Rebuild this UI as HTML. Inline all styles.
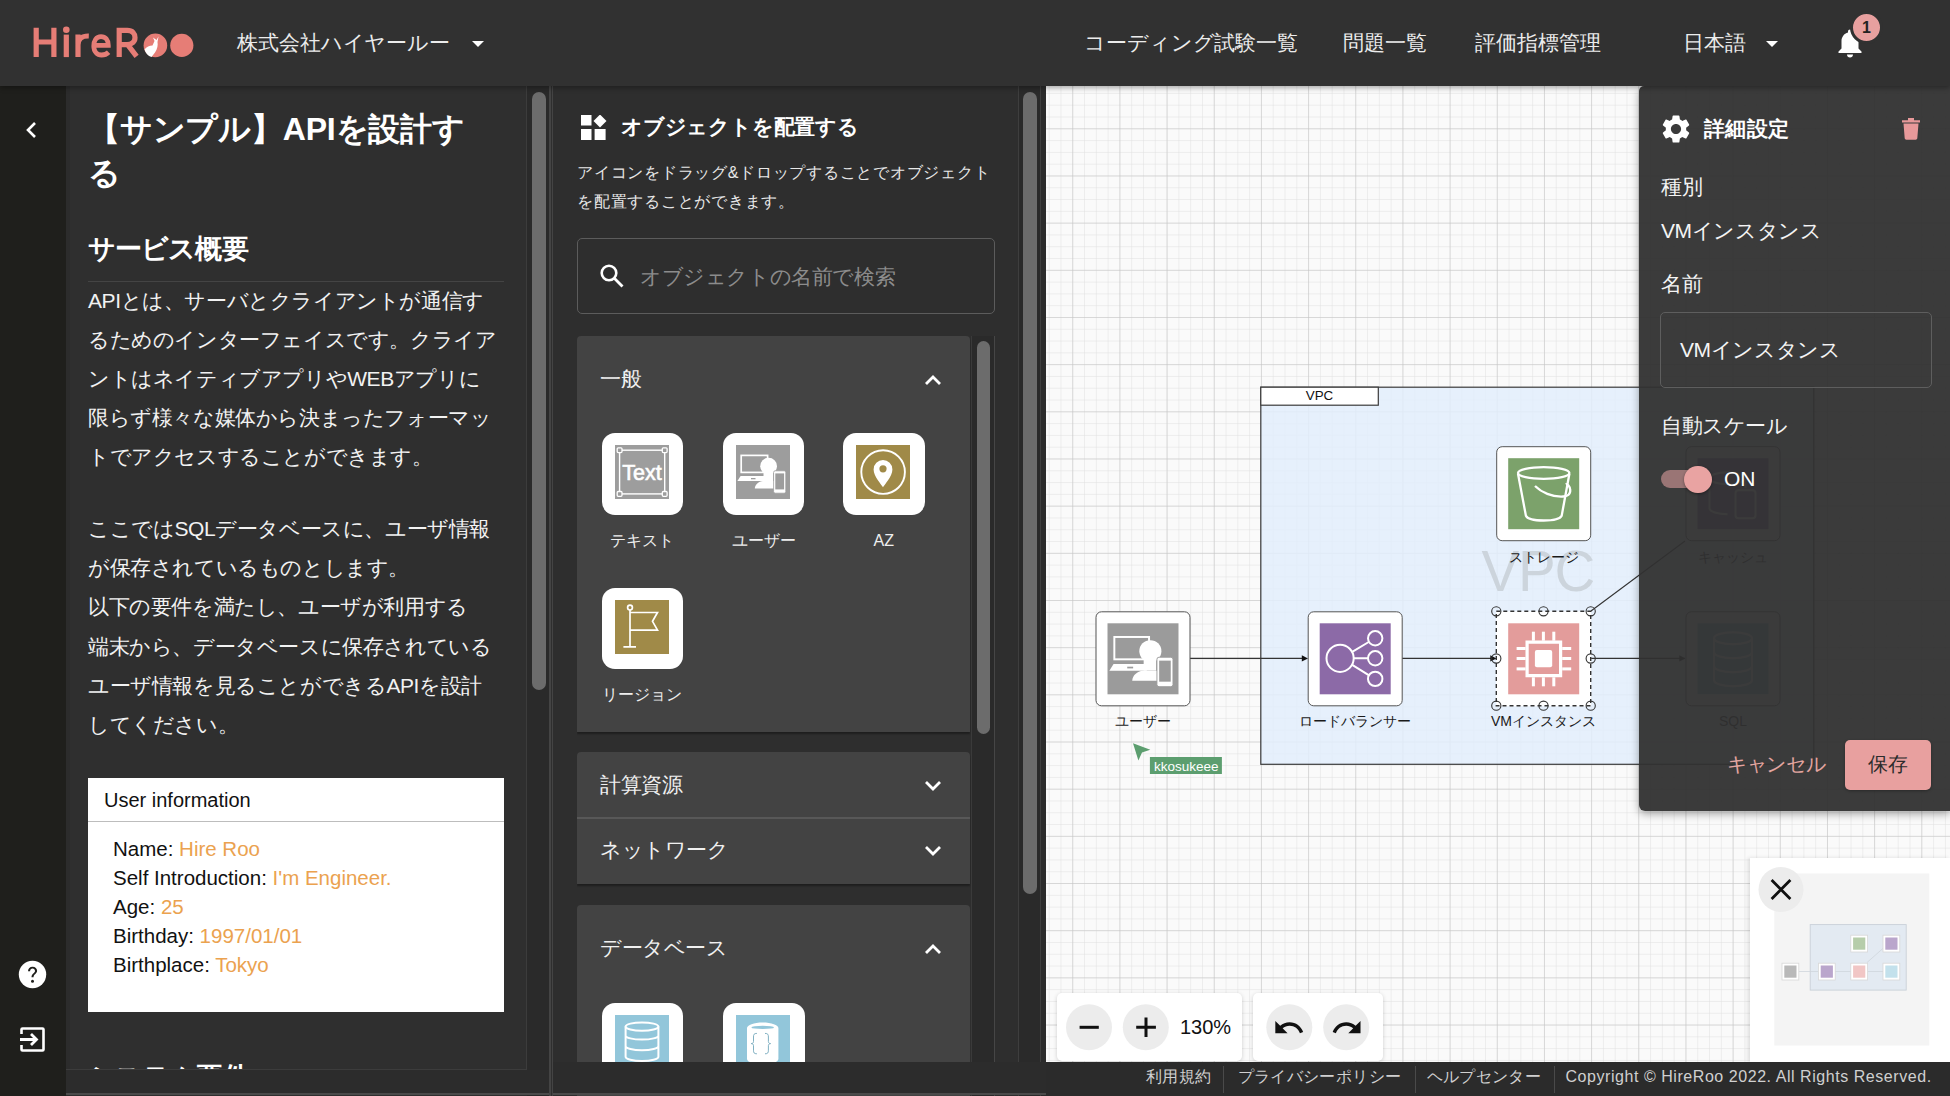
<!DOCTYPE html>
<html><head><meta charset="utf-8">
<style>
*{box-sizing:border-box;margin:0;padding:0}
html,body{width:1950px;height:1096px;overflow:hidden;background:#2b2b2b;font-family:"Liberation Sans",sans-serif;color:#fff}
.a{position:absolute;white-space:nowrap}
#hdr{left:0;top:0;width:1950px;height:86px;background:#313131;box-shadow:0 2px 5px rgba(0,0,0,.32);z-index:10}
.nav{font-size:21px;letter-spacing:-0.1px;line-height:24px;color:#ececec;top:31px}
.tri{width:0;height:0;border-left:6px solid transparent;border-right:6px solid transparent;border-top:6px solid #fff}
#side{left:0;top:86px;width:66px;height:1010px;background:#1f1f1c}
#prob{left:66px;top:86px;width:485px;height:1010px;background:#2f2f2f;overflow:hidden}
#obj{left:553px;top:86px;width:493px;height:1010px;background:#2e2e2e;overflow:hidden}
#canvas{left:1046px;top:86px;width:904px;height:976px;background-color:#fafafa;overflow:hidden}
#foot{left:1046px;top:1061.5px;width:904px;height:34.5px;background:#2b2b2b;z-index:7}
.lbl{font-size:16px;line-height:24px;text-align:center;color:#eee}
.acct{font-size:21px;letter-spacing:-0.4px;line-height:24px;color:#f0f0f0}
.clab{width:160px;text-align:center;font-size:14px;line-height:20px;color:#1a1a1a}
.dlab{font-size:21px;letter-spacing:-0.4px;line-height:24px;color:#f4f4f4}
.ft{font-size:16px;letter-spacing:0.4px;line-height:24px;color:#d0d0d0}
</style></head><body>
<!-- HEADER -->
<div id="hdr" class="a">
  <svg class="a" style="left:0;top:0" width="220" height="86" viewBox="0 0 220 86">
  <g stroke="#e67d76" fill="none" stroke-width="5.2">
    <path d="M36.2 27.8V57.1M53.9 27.8V57.1M36.2 42H53.9"/>
    <path d="M66.3 34.6V57.1"/>
    <path d="M78 57.1V34.6M78 45C78 38.5 82 35.8 88.8 36"/>
    <path d="M93.8 45.4H108.3C108.3 39.5 105.3 36.6 101 36.6C96.2 36.6 93.8 40.6 93.8 46C93.8 51.6 97.2 55 101.6 55C104.6 55 106.6 54.2 108.6 52.2" stroke-width="4.8"/>
    <path d="M119.2 57.1V30.4H127.2C132.6 30.4 135 33.6 135 37.6C135 41.8 132 44.6 127 44.6H119.2M127.6 44.6L136.6 56.3"/>
  </g>
  <circle cx="66.3" cy="29.8" r="3.3" fill="#e67d76"/>
  <circle cx="155.4" cy="45.4" r="11.8" fill="#e67d76"/>
  <circle cx="181.8" cy="45.4" r="11.6" fill="#e67d76"/>
  <path d="M144.5 49.5C146.5 47 149.5 45.5 152.5 45.5L154.5 41L153 37.5L156.5 40L158.5 36.5L157.5 42C158 45 157.5 49 155 52.5L151.5 57C148 56 145.5 53 144.5 49.5z" fill="#fff"/>
</svg>
  <div class="a nav" style="left:237px">株式会社ハイヤールー</div>
  <div class="a tri" style="left:472px;top:41px"></div>
  <div class="a nav" style="left:1084px">コーディング試験一覧</div>
  <div class="a nav" style="left:1343px">問題一覧</div>
  <div class="a nav" style="left:1475px">評価指標管理</div>
  <div class="a nav" style="left:1683px">日本語</div>
  <div class="a tri" style="left:1766px;top:41px"></div>
  <svg class="a" style="left:1836px;top:28px" width="28" height="30" viewBox="0 0 28 30">
    <path d="M14 1.5c-1.2 0-2 .9-2 2v.9C8 5.4 5.5 9 5.5 13v7.5L2.5 23.5V25h23v-1.5l-3-3V13c0-4-2.5-7.6-6.5-8.6v-.9c0-1.1-.8-2-2-2z M11 26.5c0 1.7 1.3 3 3 3s3-1.3 3-3z" fill="#fff"/>
  </svg>
  <div class="a" style="left:1850px;top:11px;width:33px;height:33px;border-radius:50%;background:#e8a09f;border:3px solid #313131;color:#222;font-size:16px;font-weight:bold;line-height:27px;text-align:center">1</div>
</div>

<!-- SIDEBAR -->
<div id="side" class="a">
  <svg class="a" style="left:24px;top:35px" width="16" height="18" viewBox="0 0 16 18"><path d="M11 2 L4 9 L11 16" stroke="#fff" stroke-width="2.6" fill="none"/></svg>
  <svg class="a" style="left:18px;top:874px" width="29" height="29" viewBox="0 0 29 29">
    <circle cx="14.5" cy="14.5" r="13.7" fill="#fff"/>
    <path d="M10 11.2c0-2.7 2-4.5 4.6-4.5 2.6 0 4.5 1.7 4.5 4 0 3-3.4 3.2-3.6 6.6h-2c0-4 3.5-4.3 3.5-6.4 0-1.3-1-2.3-2.4-2.3-1.5 0-2.5 1.1-2.5 2.6z" fill="#1f1f1c"/>
    <circle cx="14.5" cy="21.3" r="1.5" fill="#1f1f1c"/>
  </svg>
  <svg class="a" style="left:19px;top:940px" width="27" height="27" viewBox="0 0 27 27">
    <path d="M2.5 8V3.5c0-.6.4-1 1-1h20c.6 0 1 .4 1 1v20c0 .6-.4 1-1 1h-20c-.6 0-1-.4-1-1V19" stroke="#fff" stroke-width="2.6" fill="none"/>
    <path d="M1 13.5h16 M12 8l5.5 5.5L12 19" stroke="#fff" stroke-width="2.8" fill="none"/>
  </svg>
</div>

<!-- PROBLEM PANEL -->
<div id="prob" class="a">
  <div class="a" style="left:0;top:0;width:4px;height:1010px;background:#2c2c2c"></div>
  <div class="a" style="left:0;top:0;width:461px;height:984px;overflow:hidden;border-right:1px solid #3c3c3c;border-bottom:1px solid #3c3c3c">
    <div class="a" style="left:22px;top:22px;font-size:32px;letter-spacing:-0.2px;line-height:43.5px;font-weight:bold;color:#fff">【サンプル】APIを設計す<br>る</div>
    <div class="a" style="left:22px;top:148px;font-size:27px;letter-spacing:-0.9px;line-height:30px;font-weight:bold;color:#fff">サービス概要</div>
    <div class="a" style="left:22px;top:195px;width:416px;height:1px;background:#444"></div>
    <div class="a" style="left:22px;top:194.5px;font-size:21px;letter-spacing:-0.4px;line-height:39.2px;color:#f2f2f2">APIとは、サーバとクライアントが通信す<br>るためのインターフェイスです。クライア<br>ントはネイティブアプリやWEBアプリに<br>限らず様々な媒体から決まったフォーマッ<br>トでアクセスすることができます。</div>
    <div class="a" style="left:22px;top:423px;font-size:21px;letter-spacing:-0.4px;line-height:39.2px;color:#f2f2f2">ここではSQLデータベースに、ユーザ情報<br>が保存されているものとします。<br>以下の要件を満たし、ユーザが利用する<br>端末から、データベースに保存されている<br>ユーザ情報を見ることができるAPIを設計<br>してください。</div>
    <div class="a" style="left:22px;top:692px;width:416px;height:234px;background:#fff">
      <div class="a" style="left:16px;top:10px;font-size:20px;line-height:24px;color:#111">User information</div>
      <div class="a" style="left:0;top:43px;width:416px;height:1px;background:#bdbdbd"></div>
      <div class="a" style="left:25px;top:56px;font-size:20.5px;line-height:29px;color:#111">Name: <span style="color:#eba24f">Hire Roo</span><br>Self Introduction: <span style="color:#eba24f">I'm Engineer.</span><br>Age: <span style="color:#eba24f">25</span><br>Birthday: <span style="color:#eba24f">1997/01/01</span><br>Birthplace: <span style="color:#eba24f">Tokyo</span></div>
    </div>
    <div class="a" style="left:22px;top:976px;font-size:27px;letter-spacing:-0.9px;line-height:30px;font-weight:bold;color:#fff">システム要件</div>
  </div>
  <div class="a" style="left:461px;top:0;width:23px;height:1010px;background:#2a2a2a"></div>
  <div class="a" style="left:466px;top:6px;width:14px;height:598px;border-radius:7px;background:#6c6c6c"></div>
  <div class="a" style="left:0;top:984px;width:485px;height:23px;background:#2c2c2c"></div>
  <div class="a" style="left:0;top:1007px;width:485px;height:1.5px;background:#4a4a4a"></div>
  <div class="a" style="left:483px;top:0;width:2px;height:1010px;background:#444"></div>
</div>
<div class="a" style="left:551px;top:86px;width:2px;height:1010px;background:#2f2f2f"></div>
<div class="a" style="left:552px;top:86px;width:1px;height:1010px;background:#444"></div>

<div id="obj" class="a">
  <svg class="a" style="left:28px;top:29px" width="26" height="26" viewBox="0 0 26 26"><rect x="0" y="0" width="10.5" height="10.5" fill="#fff"/><rect x="0" y="14" width="10.5" height="11" fill="#fff"/><rect x="13.6" y="14" width="11" height="11" fill="#fff"/><path d="M19 -.5 L25.5 6 L19 12.5 L12.5 6z" fill="#fff"/></svg>
  <div class="a" style="left:68px;top:28px;font-size:21px;letter-spacing:-0.2px;line-height:25px;font-weight:bold;color:#fff">オブジェクトを配置する</div>
  <div class="a" style="left:24px;top:72px;font-size:16px;letter-spacing:0.75px;line-height:29.3px;color:#e8e8e8">アイコンをドラッグ&amp;ドロップすることでオブジェクト<br>を配置することができます。</div>
  <div class="a" style="left:24px;top:152px;width:418px;height:75.5px;border:1px solid #5c5c5c;border-radius:5px"></div>
  <svg class="a" style="left:46px;top:177px" width="26" height="26" viewBox="0 0 26 26"><circle cx="10" cy="10" r="7.3" stroke="#fff" stroke-width="2.6" fill="none"/><path d="M15.3 15.3 L23.5 23.5" stroke="#fff" stroke-width="2.8"/></svg>
  <div class="a" style="left:87px;top:178px;font-size:21px;letter-spacing:-0.4px;line-height:25px;color:#8c8c8c">オブジェクトの名前で検索</div>
  <div class="a" style="left:24px;top:250px;width:420px;height:812px;overflow:hidden">
    <div class="a" style="left:0;top:0;width:393px;height:396px;background:#434343;border-radius:4px 4px 0 0;box-shadow:0 2px 2px rgba(0,0,0,.35)">
      <div class="a acct" style="left:23px;top:31px">一般</div>
      <svg class="a" style="left:347px;top:37.5px" width="18" height="13" viewBox="0 0 18 13"><path d="M2 10 L9 3 L16 10" stroke="#fff" stroke-width="2.8" fill="none"/></svg>
      <div class="a" style="left:24.700000000000045px;top:97px;width:81.5px;height:81.5px;border-radius:13px;background:#fff"><div class="a" style="left:13.3px;top:12px;width:54px;height:54px"><svg width="54" height="54" viewBox="0 0 54 54"><rect width="54" height="54" fill="#9d9d9d"/><rect x="4.6" y="5.2" width="45.1" height="43.7" fill="none" stroke="#fff" stroke-width="1.4"/><g fill="#9d9d9d" stroke="#fff" stroke-width="1.3"><rect x="2.2" y="2.8" width="4.8" height="4.8" rx="1"/><rect x="47.3" y="2.8" width="4.8" height="4.8" rx="1"/><rect x="2.2" y="46.5" width="4.8" height="4.8" rx="1"/><rect x="47.3" y="46.5" width="4.8" height="4.8" rx="1"/></g><text x="27" y="35.2" text-anchor="middle" font-family="Liberation Sans" font-size="21.5" fill="#fff" stroke="#fff" stroke-width="0.6">Text</text></svg></div></div><div class="a lbl" style="left:4.7000000000000455px;top:193px;width:121.5px">テキスト</div><div class="a" style="left:145.79999999999995px;top:97px;width:81.5px;height:81.5px;border-radius:13px;background:#fff"><div class="a" style="left:13.3px;top:12px;width:54px;height:54px"><svg width="54" height="54" viewBox="0 0 54 54"><rect width="54" height="54" fill="#9d9d9d"/><rect x="5.2" y="10.4" width="26.4" height="17" fill="none" stroke="#fff" stroke-width="1.7"/><path d="M4.6 31H28.5L30 36.1H1.4z" fill="#fff"/><rect x="15" y="33" width="4.5" height="1.3" fill="#9d9d9d"/><circle cx="32.6" cy="21.2" r="8.4" fill="#fff"/><path d="M27.5 26h9.5v10h-9.5z" fill="#fff"/><path d="M18.8 43.6C19 39.5 22.5 36.4 27 36H37.5C39.5 36.4 40.5 38 40.5 43.6z" fill="#fff"/><rect x="37.6" y="25.8" width="12.2" height="22.4" rx="1.6" fill="#fff" stroke="#9d9d9d" stroke-width=".8"/><rect x="39.3" y="28.4" width="8.8" height="16" fill="#9d9d9d"/></svg></div></div><div class="a lbl" style="left:125.79999999999995px;top:193px;width:121.5px">ユーザー</div><div class="a" style="left:266px;top:97px;width:81.5px;height:81.5px;border-radius:13px;background:#fff"><div class="a" style="left:13.3px;top:12px;width:54px;height:54px"><svg width="54" height="54" viewBox="0 0 54 54"><rect width="54" height="54" fill="#a08a48"/><circle cx="27.1" cy="27.1" r="21.8" fill="none" stroke="#fff" stroke-width="1.9"/><path d="M27 42.3C26 40 17.6 31.5 17.6 24.4a9.4 9.4 0 0 1 18.8 0C36.4 31.5 28 40 27 42.3z" fill="#fff"/><circle cx="27" cy="23.8" r="3.6" fill="#a08a48"/></svg></div></div><div class="a lbl" style="left:246px;top:193px;width:121.5px">AZ</div><div class="a" style="left:24.600000000000023px;top:251.5px;width:81.5px;height:81.5px;border-radius:13px;background:#fff"><div class="a" style="left:13.3px;top:12px;width:54px;height:54px"><svg width="54" height="54" viewBox="0 0 54 54"><rect width="54" height="54" fill="#a08a48"/><g stroke="#fff" stroke-width="1.7" fill="none"><circle cx="15" cy="7.6" r="2.4"/><path d="M15 10v36.8M8.4 46.8h12.6M15 12.5h27.5l-5 8.8 5 8.8H15"/></g></svg></div></div><div class="a lbl" style="left:4.600000000000023px;top:347px;width:121.5px">リージョン</div>
    </div>
    <div class="a" style="left:0;top:416px;width:393px;height:132px;background:#434343;border-radius:4px 4px 0 0;box-shadow:0 2px 2px rgba(0,0,0,.35)">
      <div class="a acct" style="left:23px;top:21px">計算資源</div>
      <svg class="a" style="left:347px;top:27px" width="18" height="13" viewBox="0 0 18 13"><path d="M2 3 L9 10 L16 3" stroke="#fff" stroke-width="2.8" fill="none"/></svg>
      <div class="a" style="left:0;top:65px;width:393px;height:1.5px;background:#585858"></div>
      <div class="a acct" style="left:23px;top:86px">ネットワーク</div>
      <svg class="a" style="left:347px;top:92px" width="18" height="13" viewBox="0 0 18 13"><path d="M2 3 L9 10 L16 3" stroke="#fff" stroke-width="2.8" fill="none"/></svg>
    </div>
    <div class="a" style="left:0;top:569px;width:393px;height:400px;background:#434343;border-radius:4px 4px 0 0">
      <div class="a acct" style="left:23px;top:30.5px">データベース</div>
      <svg class="a" style="left:347px;top:38px" width="18" height="13" viewBox="0 0 18 13"><path d="M2 10 L9 3 L16 10" stroke="#fff" stroke-width="2.8" fill="none"/></svg>
      <div class="a" style="left:24.5px;top:98.20000000000005px;width:81.5px;height:81.5px;border-radius:13px;background:#fff"><div class="a" style="left:13.3px;top:12px;width:54px;height:54px"><svg width="54" height="54" viewBox="0 0 54 54"><rect width="54" height="54" fill="#92c6da"/><g stroke="#fff" stroke-width="2" fill="none"><ellipse cx="27" cy="11.6" rx="16.4" ry="4.2"/><path d="M10.6 11.6V41.8C10.6 44.1 17.9 46 27 46S43.4 44.1 43.4 41.8V11.6M10.6 20.4C10.6 22.7 17.9 24.6 27 24.6S43.4 22.7 43.4 20.4M10.6 31.1C10.6 33.4 17.9 35.3 27 35.3S43.4 33.4 43.4 31.1"/></g></svg></div></div><div class="a" style="left:146px;top:98.20000000000005px;width:81.5px;height:81.5px;border-radius:13px;background:#fff"><div class="a" style="left:13.3px;top:12px;width:54px;height:54px"><svg width="54" height="54" viewBox="0 0 54 54"><rect width="54" height="54" fill="#92c6da"/><path d="M11 13c0-3 7-5.5 15.7-5.5s15.7 2.5 15.7 5.5v31c0 3-7 5.5-15.7 5.5S11 47 11 44z" fill="#fff"/><ellipse cx="26.7" cy="12.4" rx="11.3" ry="1.7" fill="#92c6da"/><g stroke="#7fb0c2" stroke-width="1" fill="none"><path d="M20.9 18.4C18 18.4 17.5 19.5 17.5 22V26.5C17.5 28 16.5 28.6 15.2 28.6C16.5 28.6 17.5 29.2 17.5 30.7V35.2C17.5 37.7 18 38.8 20.9 38.8"/><path d="M29 18.4C31.9 18.4 32.4 19.5 32.4 22V26.5C32.4 28 33.4 28.6 34.6 28.6C33.4 28.6 32.4 29.2 32.4 30.7V35.2C32.4 37.7 31.9 38.8 29 38.8"/></g></svg></div></div>
    </div>
    <div class="a" style="left:395px;top:0;width:22px;height:812px;background:#2a2a2a"></div>
    <div class="a" style="left:394px;top:0;width:1px;height:812px;background:#3a3a3a"></div>
    <div class="a" style="left:417px;top:0;width:1px;height:812px;background:#464646"></div>
    <div class="a" style="left:400px;top:5px;width:13px;height:393px;border-radius:6.5px;background:#6c6c6c"></div>
  </div>
  <div class="a" style="left:465px;top:0;width:1px;height:1010px;background:#3e3e3e"></div>
  <div class="a" style="left:466px;top:0;width:21px;height:1010px;background:#2a2a2a"></div>
  <div class="a" style="left:470px;top:6px;width:14px;height:802px;border-radius:7px;background:#6c6c6c"></div>
  <div class="a" style="left:487px;top:0;width:1px;height:1010px;background:#3e3e3e"></div>
  <div class="a" style="left:488px;top:0;width:5px;height:1010px;background:#2b2b2b"></div>
  <div class="a" style="left:0;top:976px;width:493px;height:31px;background:#2c2c2c"></div>
  <div class="a" style="left:0;top:1007px;width:493px;height:1.5px;background:#4a4a4a"></div>
</div>
<div id="canvas" class="a">
<svg class="a" style="left:0;top:0" width="904" height="976" viewBox="1046 86 904 976"><defs>
<pattern id="gmin" x="1072.24" y="128.3" width="11.7925" height="11.7925" patternUnits="userSpaceOnUse"><path d="M0 0V11.7925M0 0H11.7925" stroke="#e0e0e0" stroke-width="1" fill="none"/></pattern>
<pattern id="gmaj" x="1072.24" y="128.3" width="47.17" height="47.17" patternUnits="userSpaceOnUse"><path d="M0 0V47.17M0 0H47.17" stroke="#c2c2c2" stroke-width="1" fill="none"/></pattern>
</defs>
<rect x="1046" y="86" width="904" height="976" fill="#fafafa"/>
<rect x="1046" y="86" width="904" height="976" fill="url(#gmin)"/>
<rect x="1046" y="86" width="904" height="976" fill="url(#gmaj)"/><rect x="1260.8" y="387.2" width="553" height="377.1" fill="rgba(226,238,251,0.86)" stroke="#3a3a3a" stroke-width="1.2"/><rect x="1260.8" y="387.2" width="117.5" height="18" fill="#fff" stroke="#3a3a3a" stroke-width="1.2"/><text x="1319.5" y="400" text-anchor="middle" font-family="Liberation Sans" font-size="13.4" fill="#111">VPC</text><text x="1537.8" y="591.2" text-anchor="middle" font-family="Liberation Sans" font-size="56.5" letter-spacing="-1.2" fill="#ccd4dc">VPC</text><g stroke="#333" stroke-width="1.1" fill="none"><path d="M1190 658.4H1302"/><path d="M1402 658.4H1491"/><path d="M1591 658.4H1685"/><path d="M1591 611L1685 541"/></g><path d="M1301.8 655.2L1308 658.4L1301.8 661.6z" fill="#111"/><path d="M1490.3 655.2L1496.5 658.4L1490.3 661.6z" fill="#111"/><path d="M1679.3 655.2L1685.5 658.4L1679.3 661.6z" fill="#111"/><rect x="1096.0" y="611.8" width="94" height="94" rx="5.5" fill="#fff" stroke="#555" stroke-width="1"/><g transform="translate(1107.5,623.3)"><rect width="71" height="71" fill="#9b9b9b"/><g transform="scale(1.3148)"><rect x="5.2" y="10.4" width="26.4" height="17" fill="none" stroke="#fff" stroke-width="1.5"/><path d="M4.6 31H28.5L30 36.1H1.4z" fill="#fff"/><rect x="15" y="33" width="4.5" height="1.3" fill="#9b9b9b"/><circle cx="32.6" cy="21.2" r="8.4" fill="#fff"/><path d="M27.5 26h9.5v10h-9.5z" fill="#fff"/><path d="M18.8 43.6C19 39.5 22.5 36.4 27 36H37.5C39.5 36.4 40.5 38 40.5 43.6z" fill="#fff"/><rect x="37.6" y="25.8" width="12.2" height="22.4" rx="1.6" fill="#fff" stroke="#9b9b9b" stroke-width=".7"/><rect x="39.3" y="28.4" width="8.8" height="16" fill="#9b9b9b"/></g></g><rect x="1308.2" y="611.8" width="94" height="94" rx="5.5" fill="#fff" stroke="#555" stroke-width="1"/><g transform="translate(1319.7,623.3)"><rect width="71" height="71" fill="#8c6aa7"/><g stroke="#fff" stroke-width="2" fill="none"><circle cx="20.4" cy="35" r="13.6"/><circle cx="55.5" cy="15" r="7.2"/><circle cx="55.5" cy="35" r="7.2"/><circle cx="55.5" cy="55.6" r="7.2"/><path d="M32.5 28.5L49 18.7M34 35h14.3M32.5 41.5L49 51.9"/></g></g><rect x="1496.7" y="446.7" width="94" height="94" rx="5.5" fill="#fff" stroke="#555" stroke-width="1"/><g transform="translate(1508.2,458.2)"><rect width="71" height="71" fill="#7ca26b"/><g stroke="#fff" stroke-width="2.3" fill="none"><ellipse cx="35.5" cy="14.8" rx="25.7" ry="5.8"/><path d="M9.8 15.5L17.7 57.5C19 60.5 26 62.3 35.5 62.3S52 60.5 53.5 57.5L61.2 15.5"/><path d="M26.8 27.8C33 34 44 39 55 38.3C59 38 62.5 36.5 62 31.5C61.5 27.5 59 25.5 57.5 26"/></g></g><rect x="1686.0" y="446.7" width="94" height="94" rx="5.5" fill="#fff" stroke="#555" stroke-width="1"/><g transform="translate(1697.5,458.2)"><rect width="71" height="71" fill="#8c6aa7"/><g stroke="#fff" stroke-width="2" fill="none"><ellipse cx="30" cy="20" rx="18" ry="6"/><path d="M12 20v30c0 3.3 8 6 18 6M48 20v10"/><rect x="38" y="32" width="20" height="28" rx="3"/></g></g><rect x="1686.0" y="611.8" width="94" height="94" rx="5.5" fill="#fff" stroke="#555" stroke-width="1"/><g transform="translate(1697.5,623.3)"><rect width="71" height="71" fill="#92c6da"/><g stroke="#fff" stroke-width="2" fill="none"><ellipse cx="35.5" cy="15" rx="19" ry="6"/><path d="M16.5 15v42c0 3.3 8.5 6 19 6s19-2.7 19-6V15M16.5 29c0 3.3 8.5 6 19 6s19-2.7 19-6M16.5 43c0 3.3 8.5 6 19 6s19-2.7 19-6"/></g></g><rect x="1496.2" y="611.3" width="95" height="95" fill="#fff"/><g transform="translate(1508.2,623.3)"><rect width="71" height="71" fill="#e39c9b"/><g fill="#fff"><path d="M17.3 17.3h36.7v36.7H17.3z M20.5 20.5v30.3h30.3V20.5z" fill-rule="evenodd"/><rect x="26.7" y="26.7" width="17.3" height="17.3" rx="2"/>
<rect x="23.7" y="8.4" width="3" height="9"/><rect x="33.7" y="8.4" width="3" height="9"/><rect x="44.1" y="8.4" width="3" height="9"/>
<rect x="23.7" y="54" width="3" height="9"/><rect x="33.7" y="54" width="3" height="9"/><rect x="44.1" y="54" width="3" height="9"/>
<rect x="8.4" y="23.7" width="9" height="3"/><rect x="8.4" y="33.7" width="9" height="3"/><rect x="8.4" y="44.1" width="9" height="3"/>
<rect x="54" y="23.7" width="9" height="3"/><rect x="54" y="33.7" width="9" height="3"/><rect x="54" y="44.1" width="9" height="3"/></g></g><rect x="1496.3" y="611.3" width="94.4" height="94.4" fill="none" stroke="#333" stroke-width="1.4" stroke-dasharray="4 3"/><circle cx="1496.3" cy="611.3" r="4.6" fill="none" stroke="#333" stroke-width="1.1"/><circle cx="1496.3" cy="658.5" r="4.6" fill="none" stroke="#333" stroke-width="1.1"/><circle cx="1496.3" cy="705.7" r="4.6" fill="none" stroke="#333" stroke-width="1.1"/><circle cx="1543.5" cy="611.3" r="4.6" fill="none" stroke="#333" stroke-width="1.1"/><circle cx="1543.5" cy="705.7" r="4.6" fill="none" stroke="#333" stroke-width="1.1"/><circle cx="1590.7" cy="611.3" r="4.6" fill="none" stroke="#333" stroke-width="1.1"/><circle cx="1590.7" cy="658.5" r="4.6" fill="none" stroke="#333" stroke-width="1.1"/><circle cx="1590.7" cy="705.7" r="4.6" fill="none" stroke="#333" stroke-width="1.1"/><path d="M1133 743.3L1150.3 749.7L1142 752.5L1138.4 760.6z" fill="#5c9e6f"/><rect x="1149.9" y="757" width="72" height="17" fill="#5c9e6f"/><text x="1154" y="770.5" font-family="Liberation Sans" font-size="13.5" fill="#fff">kkosukeee</text></svg>
<div class="a clab" style="left:16.700000000000045px;top:625.4px">ユーザー</div><div class="a clab" style="left:229px;top:625.4px">ロードバランサー</div><div class="a clab" style="left:417.5px;top:461.29999999999995px">ストレージ</div><div class="a clab" style="left:417.5px;top:625.3px">VMインスタンス</div><div class="a clab" style="left:607px;top:461.29999999999995px">キャッシュ</div><div class="a clab" style="left:607px;top:625.3px">SQL</div>
</div>
<div id="detail" class="a" style="left:1639px;top:86px;width:311px;height:725.4px;background:rgba(48,48,48,0.95);border-radius:5px 0 0 6px;box-shadow:0 3px 8px rgba(0,0,0,.35);z-index:6">
  <svg class="a" style="left:20px;top:26px" width="34" height="34" viewBox="0 0 24 24"><path fill="#fff" d="M19.14 12.94c.04-.3.06-.61.06-.94 0-.32-.02-.64-.07-.94l2.03-1.58c.18-.14.23-.41.12-.61l-1.92-3.32c-.12-.22-.37-.29-.59-.22l-2.39.96c-.5-.38-1.03-.7-1.62-.94l-.36-2.54c-.04-.24-.24-.41-.48-.41h-3.84c-.24 0-.43.17-.47.41l-.36 2.54c-.59.24-1.13.57-1.62.94l-2.39-.96c-.22-.08-.47 0-.59.22L2.74 8.87c-.12.21-.08.47.12.61l2.030 1.58c-.05.3-.09.63-.09.94s.02.64.07.94l-2.03 1.58c-.18.14-.23.41-.12.61l1.92 3.32c.12.22.37.29.59.22l2.39-.96c.5.38 1.03.7 1.62.94l.36 2.54c.05.24.24.41.48.41h3.84c.24 0 .44-.17.47-.41l.36-2.54c.59-.24 1.13-.56 1.62-.94l2.39.96c.22.08.47 0 .59-.22l1.92-3.32c.12-.22.07-.47-.12-.61l-2.01-1.58zM12 15.6c-1.98 0-3.6-1.62-3.6-3.6s1.62-3.6 3.6-3.6 3.6 1.62 3.6 3.6-1.62 3.6-3.6 3.6z"/></svg>
  <div class="a" style="left:65px;top:30px;font-size:21px;letter-spacing:0.4px;line-height:25px;font-weight:bold;color:#fff">詳細設定</div>
  <svg class="a" style="left:262px;top:31px" width="20" height="23" viewBox="0 0 20 23"><path d="M2.5 6.5h15l-1.2 14.8c-.1.9-.8 1.4-1.6 1.4H5.3c-.8 0-1.5-.5-1.6-1.4z M1 3.2h18v2.3H1z M7 1h6v2.5H7z" fill="#e8999a"/></svg>
  <div class="a dlab" style="left:22px;top:89px">種別</div>
  <div class="a dlab" style="left:22px;top:132.5px">VMインスタンス</div>
  <div class="a dlab" style="left:22px;top:186px">名前</div>
  <div class="a" style="left:21px;top:226.4px;width:271.6px;height:76px;border:1px solid #5e5e5e;border-radius:5px"></div>
  <div class="a dlab" style="left:41px;top:252px">VMインスタンス</div>
  <div class="a dlab" style="left:22px;top:327.5px">自動スケール</div>
  <div class="a" style="left:22px;top:383.7px;width:40px;height:18px;border-radius:9px;background:#9a7575"></div>
  <div class="a" style="left:45px;top:379.6px;width:27.6px;height:27.6px;border-radius:50%;background:#e9a3a2;box-shadow:0 1px 3px rgba(0,0,0,.4)"></div>
  <div class="a" style="left:85px;top:380.5px;font-size:21px;line-height:24px;color:#fff">ON</div>
  <div class="a" style="left:88px;top:666px;font-size:20px;letter-spacing:-0.3px;line-height:24px;color:#e3a5a0">キャンセル</div>
  <div class="a" style="left:205.7px;top:654.3px;width:86.7px;height:49.4px;border-radius:5px;background:#e8a09f;box-shadow:0 1px 3px rgba(0,0,0,.3)"></div>
  <div class="a" style="left:205.7px;top:666px;width:86.7px;text-align:center;font-size:20px;line-height:24px;color:#2c2c2c">保存</div>
</div>
<div class="a" style="left:1750px;top:857.5px;width:200px;height:204.5px;background:#fff;box-shadow:-2px 0 4px rgba(0,0,0,.12);z-index:5">
<svg class="a" style="left:0;top:0" width="200" height="204.5" viewBox="1750 857.5 200 204.5"><rect x="1774.3" y="873" width="155" height="172" fill="#f4f4f4"/><rect x="1810.2" y="924.1" width="96" height="65.5" fill="#e3eaf2" stroke="#c9d0d8" stroke-width=".9"/><g stroke="#cfd6dc" stroke-width=".8"><path d="M1799 971H1818M1835 971H1851M1868 971H1883M1867 962L1884 947"/></g><rect x="1782" y="962.7" width="16.8" height="16.8" fill="#fff" stroke="#d8d8d8" stroke-width=".8"/><rect x="1784.3" y="965.0" width="12.2" height="12.2" fill="#b9b9b9"/><rect x="1818.4" y="962.7" width="16.8" height="16.8" fill="#fff" stroke="#d8d8d8" stroke-width=".8"/><rect x="1820.7" y="965.0" width="12.2" height="12.2" fill="#baa6cc"/><rect x="1850.8" y="962.7" width="16.8" height="16.8" fill="#fff" stroke="#d8d8d8" stroke-width=".8"/><rect x="1853.1" y="965.0" width="12.2" height="12.2" fill="#f1c6c5"/><rect x="1883" y="962.7" width="16.8" height="16.8" fill="#fff" stroke="#d8d8d8" stroke-width=".8"/><rect x="1885.3" y="965.0" width="12.2" height="12.2" fill="#c3e1ec"/><rect x="1850.8" y="934.7" width="16.8" height="16.8" fill="#fff" stroke="#d8d8d8" stroke-width=".8"/><rect x="1853.1" y="937.0" width="12.2" height="12.2" fill="#b6cdaa"/><rect x="1883" y="934.7" width="16.8" height="16.8" fill="#fff" stroke="#d8d8d8" stroke-width=".8"/><rect x="1885.3" y="937.0" width="12.2" height="12.2" fill="#baa6cc"/>
<circle cx="1781" cy="889" r="22.5" fill="#ececec"/><path d="M1771.6 879.6L1790.4 898.4M1790.4 879.6L1771.6 898.4" stroke="#111" stroke-width="2.8"/></svg>
</div>
<div class="a" style="left:1057.2px;top:993px;width:184.8px;height:67.7px;background:#fff;border-radius:5px;box-shadow:0 1px 4px rgba(0,0,0,.18);z-index:5"></div>
<div class="a" style="left:1252.5px;top:993px;width:130.5px;height:67.7px;background:#fff;border-radius:5px;box-shadow:0 1px 4px rgba(0,0,0,.18);z-index:5"></div>
<svg class="a" style="left:1046px;top:990px;z-index:6" width="350" height="72" viewBox="1046 990 350 72">
<circle cx="1089" cy="1027.2" r="23" fill="#ececec"/><circle cx="1145.8" cy="1027.2" r="23" fill="#ececec"/>
<circle cx="1289.3" cy="1027.2" r="23" fill="#ececec"/><circle cx="1346.2" cy="1027.2" r="23" fill="#ececec"/>
<path d="M1079.6 1027.3H1098.8" stroke="#111" stroke-width="3"/>
<path d="M1136.2 1027.3H1155.9M1146 1017.6V1037" stroke="#111" stroke-width="3"/>
<g transform="translate(1272.6 1011.4) scale(1.36)"><path fill="#111" d="M12.5 8c-2.65 0-5.050.99-6.9 2.6L2 7v9h9l-3.62-3.62c1.39-1.16 3.16-1.88 5.12-1.88 3.54 0 6.55 2.31 7.6 5.5l2.37-.78C21.08 11.03 17.15 8 12.5 8z"/></g>
<g transform="translate(1330.6 1011.4) scale(1.36)"><path fill="#111" d="M18.4 10.6C16.55 8.99 14.15 8 11.5 8c-4.65 0-8.58 3.03-9.96 7.22L3.9 16c1.05-3.190 4.05-5.5 7.6-5.5 1.95 0 3.73.72 5.12 1.88L13 16h9V7l-3.6 3.6z"/></g>
</svg>
<div class="a" style="left:1180px;top:1015px;font-size:20px;line-height:24px;color:#111;z-index:6">130%</div>
<div id="foot" class="a">
  <div class="a ft" style="left:100px;top:3px">利用規約</div>
  <div class="a" style="left:177px;top:4px;width:1px;height:27px;background:#4a4a4a"></div>
  <div class="a ft" style="left:191.5px;top:3px">プライバシーポリシー</div>
  <div class="a" style="left:369px;top:4px;width:1px;height:27px;background:#4a4a4a"></div>
  <div class="a ft" style="left:380.5px;top:3px">ヘルプセンター</div>
  <div class="a" style="left:508px;top:4px;width:1px;height:27px;background:#4a4a4a"></div>
  <div class="a ft" style="left:519.5px;top:3px;letter-spacing:0.55px">Copyright © HireRoo 2022. All Rights Reserved.</div>
</div>
</body></html>
